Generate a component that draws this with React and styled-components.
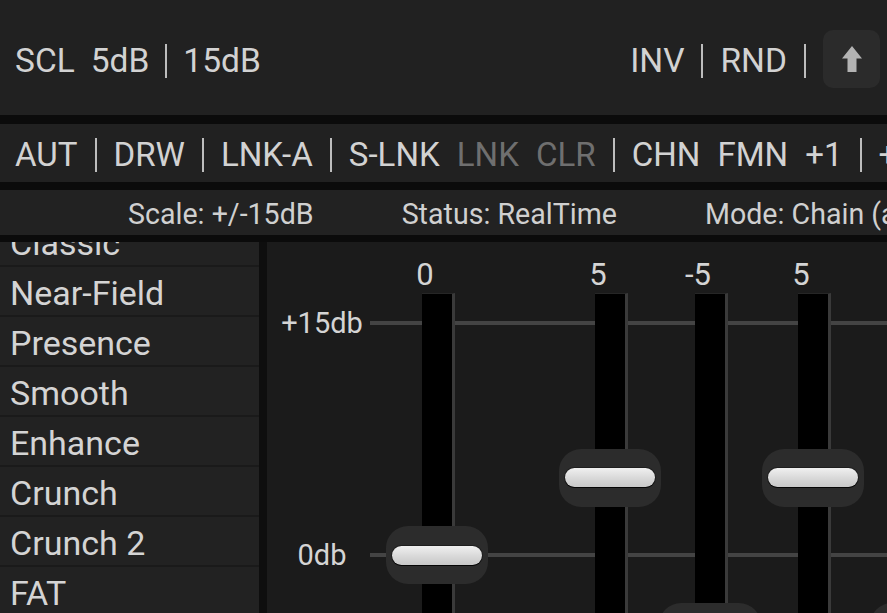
import React from "react";
import styled, { createGlobalStyle } from "styled-components";

const GlobalStyle = createGlobalStyle`
  html, body {
    margin: 0;
    padding: 0;
    background: #0b0b0b;
    overflow: hidden;
  }
  body {
    font-family: Roboto, "Noto Sans", sans-serif;
    color: #d2d2d2;
  }
`;

const Page = styled.div`
  display: flex;
  flex-direction: column;
  width: 887px;
  height: 613px;
  overflow: hidden;
  background: #0b0b0b;
`;

const TopBar = styled.div`
  display: flex;
  align-items: center;
  justify-content: space-between;
  height: 115px;
  padding: 2px 7px 0 15px;
  box-sizing: border-box;
  background: #212121;
  flex-shrink: 0;
`;

const Group = styled.div`
  display: flex;
  align-items: center;
  gap: ${(props) => props.$gap || 16}px;
  white-space: nowrap;
`;

const Word = styled.span`
  font-size: ${(props) => props.$size || 33.5}px;
  line-height: 1;
  padding-top: 4px;
  color: ${(props) => (props.$dim ? "#6f6f6f" : "#d2d2d2")};
`;

const Sep = styled.span`
  width: 2px;
  height: 34px;
  margin-top: 4px;
  background: #bdbdbd;
  flex-shrink: 0;
`;

const IconButton = styled.button`
  display: flex;
  align-items: center;
  justify-content: center;
  width: 57px;
  height: 58px;
  border: none;
  border-radius: 10px;
  background: #2b2b2b;
  padding: 0;
`;

const Toolbar = styled.div`
  display: flex;
  align-items: center;
  gap: 17px;
  height: 58px;
  margin-top: 9px;
  padding-left: 15px;
  background: #212121;
  white-space: nowrap;
  overflow: hidden;
  flex-shrink: 0;
`;

const StatusBar = styled.div`
  display: flex;
  align-items: center;
  gap: 88px;
  height: 45px;
  margin-top: 8px;
  padding: 3px 0 0 128px;
  box-sizing: border-box;
  background: #222222;
  white-space: nowrap;
  overflow: hidden;
  flex-shrink: 0;
`;

const Status = styled.span`
  font-size: 28.6px;
  line-height: 1;
  color: #d0d0d0;
`;

const Main = styled.div`
  display: flex;
  flex: 1;
  min-height: 0;
  margin-top: 7px;
`;

const PresetList = styled.div`
  width: 259px;
  flex-shrink: 0;
  overflow: hidden;
  background: #222222;
  border-right: 8px solid #0e0e0e;
`;

const PresetScroll = styled.div`
  margin-top: -25px;
`;

const Preset = styled.div`
  display: flex;
  align-items: center;
  height: 50px;
  padding: 4px 0 0 10px;
  box-sizing: border-box;
  border-bottom: 2px solid #1a1a1a;
  font-size: 34px;
  line-height: 1;
  color: #d4d4d4;
`;

const EqPanel = styled.div`
  position: relative;
  flex: 1;
  overflow: hidden;
  background: #1b1b1b;
`;

const GridLine = styled.div`
  position: absolute;
  left: 103px;
  right: 0;
  top: ${(props) => props.$y - 2}px;
  height: 4px;
  background: #444444;
`;

const ScaleLabel = styled.span`
  position: absolute;
  left: 55px;
  top: ${(props) => props.$y}px;
  transform: translate(-50%, -50%);
  font-size: 29px;
  line-height: 1;
  color: #d4d4d4;
`;

const Fader = styled.div`
  position: absolute;
  top: 0;
  bottom: 0;
  left: ${(props) => props.$x}px;
  width: 33px;
`;

const FaderValue = styled.span`
  position: absolute;
  left: 3px;
  top: 32px;
  transform: translate(-50%, -50%);
  font-size: 31px;
  line-height: 1;
  color: #d4d4d4;
`;

const Track = styled.div`
  position: absolute;
  top: 51px;
  bottom: 0;
  left: 0;
  width: 30px;
  background: #000;
  border-right: 3px solid #3a3a3a;
  border-top: 1px solid #262626;
`;

const Thumb = styled.div`
  position: absolute;
  left: -36px;
  width: 102px;
  height: 58px;
  margin-top: -29px;
  display: flex;
  align-items: center;
  justify-content: center;
  border-radius: 22px;
  background: #2c2c2c;
`;

const Grip = styled.div`
  width: 90px;
  height: 19px;
  border-radius: 10px;
  background: linear-gradient(#f0f0f0, #d6d6d6 60%, #c8c8c8);
  box-shadow: 0 1px 0 #050505, 0 0 0 1px #1e1e1e;
`;

const ArrowUp = () => (
  <svg width="20" height="26" viewBox="0 0 20 26">
    <path d="M10 0 L20 12.5 H14.5 V26 H5.5 V12.5 H0 Z" fill="#b3b3b3" />
  </svg>
);

const presets = [
  "Classic",
  "Near-Field",
  "Presence",
  "Smooth",
  "Enhance",
  "Crunch",
  "Crunch 2",
  "FAT",
];

const tools = [
  { label: "AUT" },
  { sep: true },
  { label: "DRW" },
  { sep: true },
  { label: "LNK-A" },
  { sep: true },
  { label: "S-LNK" },
  { label: "LNK", dim: true },
  { label: "CLR", dim: true },
  { sep: true },
  { label: "CHN" },
  { label: "FMN" },
  { label: "+1" },
  { sep: true },
  { label: "+1" },
];

const faders = [
  { x: 155, value: 0 },
  { x: 328, value: 5 },
  { x: 428, value: -5 },
  { x: 531, value: 5 },
  { x: 639, value: -5 },
];

const ZERO_Y = 313;
const PX_PER_DB = 232 / 15;

const App = () => (
  <>
    <GlobalStyle />
    <Page>
      <TopBar>
        <Group>
          <Word>SCL</Word>
          <Word>5dB</Word>
          <Sep />
          <Word>15dB</Word>
        </Group>
        <Group $gap={17}>
          <Word>INV</Word>
          <Sep />
          <Word>RND</Word>
          <Sep />
          <IconButton>
            <ArrowUp />
          </IconButton>
        </Group>
      </TopBar>

      <Toolbar>
        {tools.map((t, i) =>
          t.sep ? (
            <Sep key={i} />
          ) : (
            <Word key={i} $dim={t.dim} $size={33.1}>
              {t.label}
            </Word>
          )
        )}
      </Toolbar>

      <StatusBar>
        <Status>Scale: +/-15dB</Status>
        <Status>Status: RealTime</Status>
        <Status>Mode: Chain (auto)</Status>
      </StatusBar>

      <Main>
        <PresetList>
          <PresetScroll>
            {presets.map((p) => (
              <Preset key={p}>{p}</Preset>
            ))}
          </PresetScroll>
        </PresetList>

        <EqPanel>
          <GridLine $y={81} />
          <GridLine $y={ZERO_Y} />
          <ScaleLabel $y={81}>+15db</ScaleLabel>
          <ScaleLabel $y={ZERO_Y}>0db</ScaleLabel>
          {faders.map((f, i) => (
            <Fader key={i} $x={f.x}>
              <FaderValue>{f.value}</FaderValue>
              <Track />
              <Thumb style={{ top: ZERO_Y - f.value * PX_PER_DB }}>
                <Grip />
              </Thumb>
            </Fader>
          ))}
        </EqPanel>
      </Main>
    </Page>
  </>
);

export default App;
